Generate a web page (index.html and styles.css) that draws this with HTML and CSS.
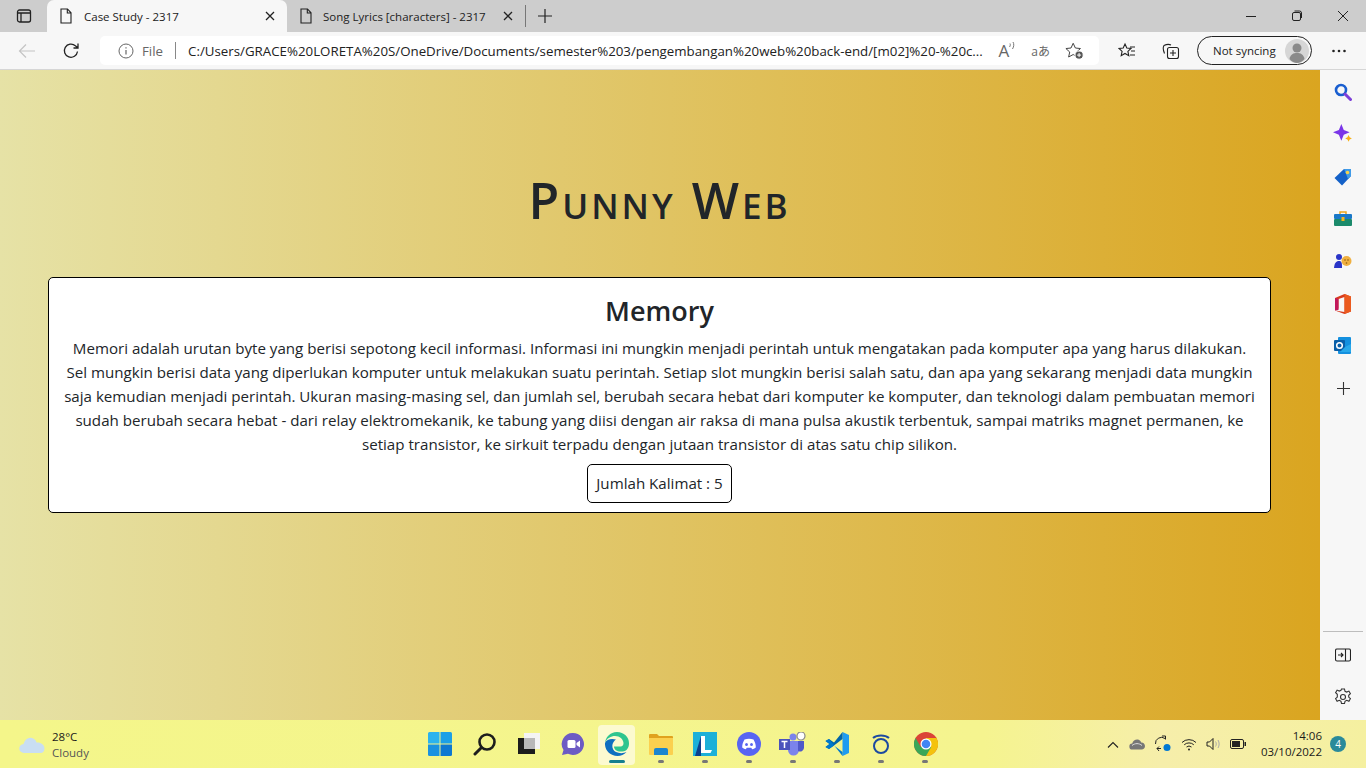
FILE: index.html
```html
<!DOCTYPE html>
<html>
<head>
  <title>Case Study - 2317</title>
  <link rel="stylesheet" href="styles.css">
</head>
<body>

  <div class="tabstrip">
    <div class="tabs-btn">
      <svg width="16" height="16" viewBox="0 0 16 16" fill="none" stroke="#222" stroke-width="1.3"><rect x="1.5" y="2" width="13" height="12" rx="2"/><path d="M1.5 5h13M5 5v9"/></svg>
    </div>
    <div class="tab tab-active">
      <svg class="page-icon" width="14" height="16" viewBox="0 0 14 16" fill="none" stroke="#222" stroke-width="1.1"><path d="M2 1h6.5L12 4.8V15H2zM8.3 1v4H12"/></svg>
      <span class="tab-title">Case Study - 2317</span>
      <svg width="10" height="10" viewBox="0 0 10 10" stroke="#222" stroke-width="1.3"><path d="M1 1l8 8M9 1l-8 8"/></svg>
    </div>
    <div class="tab">
      <svg class="page-icon" width="14" height="16" viewBox="0 0 14 16" fill="none" stroke="#222" stroke-width="1.1"><path d="M2 1h6.5L12 4.8V15H2zM8.3 1v4H12"/></svg>
      <span class="tab-title">Song Lyrics [characters] - 2317</span>
      <svg width="10" height="10" viewBox="0 0 10 10" stroke="#222" stroke-width="1.3"><path d="M1 1l8 8M9 1l-8 8"/></svg>
    </div>
    <div class="tab-sep"></div>
    <div class="new-tab">
      <svg width="14" height="14" viewBox="0 0 14 14" stroke="#222" stroke-width="1.2"><path d="M7 0v14M0 7h14"/></svg>
    </div>
    <div class="win-btns">
      <svg width="46" height="12" viewBox="0 0 46 12" stroke="#222"><path d="M18 6.5h10"/></svg>
      <svg width="46" height="12" viewBox="0 0 46 12" fill="none" stroke="#222"><rect x="18.5" y="2.5" width="8" height="8" rx="1.5"/><path d="M20.5 1h5a2 2 0 0 1 2 2v5"/></svg>
      <svg width="46" height="12" viewBox="0 0 46 12" stroke="#222"><path d="M18 1l10 10M28 1l-10 10"/></svg>
    </div>
  </div>

  <div class="toolbar">
    <div class="tool-btn back-btn">
      <svg width="18" height="16" viewBox="0 0 18 16" fill="none" stroke="#c4c4c4" stroke-width="1.2"><path d="M17 8H1.5M8 1.5L1.5 8 8 14.5"/></svg>
    </div>
    <div class="tool-btn reload-btn">
      <svg width="18" height="18" viewBox="0 0 18 18" fill="none" stroke="#222" stroke-width="1.3"><path d="M15.5 9.5A6.6 6.6 0 1 1 13.4 3.8L16 6M16 1.5V6h-4.5"/></svg>
    </div>
    <div class="address">
      <svg width="16" height="16" viewBox="0 0 16 16" fill="none" stroke="#666" stroke-width="1"><circle cx="8" cy="8" r="7"/><path d="M8 7v4.5M8 4.2v1.4" stroke-width="1.2"/></svg>
      <span class="file-label">File</span>
      <span class="addr-sep"></span>
      <span class="url">C:/Users/GRACE%20LORETA%20S/OneDrive/Documents/semester%203/pengembangan%20web%20back-end/[m02]%20-%20c...</span>
      <span class="addr-icons">
        <span class="read-aloud">A<svg width="7" height="10" viewBox="0 0 7 10" fill="none" stroke="#777"><path d="M.5 6c.9-1.200 1-2.500.5-3.500M3.500 8C5 5.500 5.200 3 4 1"/></svg></span>
        <span class="translate">aあ</span>
        <svg width="20" height="20" viewBox="0 0 22 20" fill="none" stroke="#444" stroke-width="1.1"><path d="M9 1.5l2.400 5.200 5.600.6-4.200 3.800 1.200 5.500L9 13.900l-5 2.700 1.200-5.500L1 7.300l5.600-.6z"/><circle cx="15.500" cy="14.500" r="4.500" fill="#555" stroke="#fff"/><path d="M15.500 12.300v4.400M13.300 14.500h4.400" stroke="#fff"/></svg>
      </span>
    </div>
    <div class="tool-btn fav-btn">
      <svg width="18" height="18" viewBox="0 0 18 18" fill="none" stroke="#222" stroke-width="1.1"><path d="M7 2l1.800 4 4.200.5-3.100 2.900.9 4.300L7 11.500l-3.800 2.200.9-4.300L1 6.500 5.200 6zM12 5h5M13 9h4M12 13h5"/></svg>
    </div>
    <div class="tool-btn coll-btn">
      <svg width="18" height="18" viewBox="0 0 18 18" fill="none" stroke="#222" stroke-width="1.1"><path d="M2.500 11.500C1 8 1 5 2 3.500c3-1.500 5-1.500 7-.5"/><rect x="5.500" y="5.500" width="11" height="11" rx="2"/><path d="M11 8v6M8 11h6"/></svg>
    </div>
    <div class="sync-pill">
      <span>Not syncing</span>
      <svg width="24" height="24" viewBox="0 0 24 24"><circle cx="12" cy="12" r="12" fill="#d6d6d6"/><circle cx="12" cy="9" r="4.500" fill="#8a8a8a"/><path d="M4.500 20c1-5 4-6 7.500-6s6.500 1 7.500 6c-2 2.500-5 4-7.500 4s-5.500-1.500-7.500-4z" fill="#8a8a8a"/></svg>
    </div>
    <div class="tool-btn more-btn">
      <svg width="16" height="4" viewBox="0 0 16 4" fill="#222"><circle cx="2.500" cy="2" r="1.300"/><circle cx="8" cy="2" r="1.300"/><circle cx="13.500" cy="2" r="1.300"/></svg>
    </div>
  </div>

  <div class="main">
    <div class="page">
      <h1>Punny Web</h1>
      <div class="card">
        <h2>Memory</h2>
        <p>Memori adalah urutan byte yang berisi sepotong kecil informasi. Informasi ini mungkin menjadi perintah untuk mengatakan pada komputer apa yang harus dilakukan.<br>
        Sel mungkin berisi data yang diperlukan komputer untuk melakukan suatu perintah. Setiap slot mungkin berisi salah satu, dan apa yang sekarang menjadi data mungkin<br>
        saja kemudian menjadi perintah. Ukuran masing-masing sel, dan jumlah sel, berubah secara hebat dari komputer ke komputer, dan teknologi dalam pembuatan memori<br>
        sudah berubah secara hebat - dari relay elektromekanik, ke tabung yang diisi dengan air raksa di mana pulsa akustik terbentuk, sampai matriks magnet permanen, ke<br>
        setiap transistor, ke sirkuit terpadu dengan jutaan transistor di atas satu chip silikon.</p>
        <div class="count">Jumlah Kalimat : 5</div>
      </div>
    </div>

    <div class="sidebar">
      <div class="side-item">
        <svg width="18" height="18" viewBox="0 0 18 18" fill="none"><circle cx="7" cy="7" r="5" stroke="#1a5fd0" stroke-width="2.600"/><path d="M11 11l5.500 5.500" stroke="#7d3fd8" stroke-width="3" stroke-linecap="round"/></svg>
      </div>
      <div class="side-item">
        <svg width="20" height="20" viewBox="0 0 18 18"><path d="M7.500 0l2.200 5.300L15 7.500l-5.300 2.200L7.500 15l-2.200-5.300L0 7.500l5.300-2.200z" fill="#7a35e8"/><path d="M14 10l1 2 2 1-2 1-1 2-1-2-2-1 2-1z" fill="#f7b21a"/></svg>
      </div>
      <div class="side-item">
        <svg width="18" height="18" viewBox="0 0 18 18"><path d="M10 1h7v7l-9 9.500L.5 10z" fill="#1461c8"/><path d="M10 1h7v7l-3 3z" fill="#3f9be8"/><circle cx="13.500" cy="4.500" r="1.800" fill="#f8d24a"/></svg>
      </div>
      <div class="side-item">
        <svg width="18" height="16" viewBox="0 0 18 16"><path d="M6 3V1h6v2" fill="none" stroke="#eba51f" stroke-width="1.500"/><rect y="3" width="18" height="5" rx="1" fill="#1a78c8"/><rect y="8" width="18" height="7" rx="1" fill="#1b8a6b"/><rect x="7.500" y="6" width="3" height="4" fill="#f4b41f"/></svg>
      </div>
      <div class="side-item">
        <svg width="18" height="16" viewBox="0 0 18 16"><circle cx="5" cy="4" r="3" fill="#2a35c8"/><path d="M0 15c.5-5 2-7 5-7s3 2 3 7z" fill="#2a35c8"/><circle cx="12.500" cy="8" r="5" fill="#f0b040"/><circle cx="11" cy="7" r=".8" fill="#8a5a10"/><circle cx="14" cy="7" r=".8" fill="#8a5a10"/><circle cx="12.500" cy="10" r=".8" fill="#8a5a10"/></svg>
      </div>
      <div class="side-item">
        <svg width="16" height="20" viewBox="0 0 16 20"><path d="M9.500 0L16 2.500v15L9.500 20 0 16.500 9.500 18V3L3.500 5v9.500L0 16.500V4z" fill="#d83b1c"/><path d="M9.500 0L16 2.500v15L9.500 20z" fill="#eb5a1e"/><path d="M0 4l3.500 1v11L0 16.500z" fill="#c2185b"/></svg>
      </div>
      <div class="side-item">
        <svg width="18" height="18" viewBox="0 0 18 18"><rect x="4" y="0" width="13" height="17" rx="1" fill="#1490df"/><rect x="0" y="3" width="11" height="11" rx="1" fill="#0a5fa8"/><circle cx="5.500" cy="8.500" r="2.800" fill="none" stroke="#fff" stroke-width="1.500"/><path d="M11 10l6-3v8H6z" fill="#28a8ea"/></svg>
      </div>
      <div class="side-item">
        <svg width="13" height="13" viewBox="0 0 13 13" stroke="#333" stroke-width="1.100"><path d="M6.500 0v13M0 6.500h13"/></svg>
      </div>
      <div class="side-bottom">
        <div class="side-rule"></div>
        <div class="side-item">
          <svg width="16" height="14" viewBox="0 0 16 14" fill="none" stroke="#222" stroke-width="1.100"><rect x=".5" y="1" width="15" height="12" rx="1.500"/><path d="M10.500 1v12M3 7h5M6 5l2 2-2 2"/></svg>
        </div>
        <div class="side-item">
          <svg width="18" height="18" viewBox="0 0 18 18" fill="none" stroke="#333" stroke-width="1.100"><circle cx="9" cy="9" r="2.500"/><path d="M7.500 1h3l.5 2.300 1.700.8 2.200-1 1.500 2.600-1.700 1.600v1.800l1.700 1.600-1.500 2.600-2.200-1-1.700 1-.5 2.200h-3l-.5-2.200-1.700-1-2.200 1-1.500-2.600 1.700-1.600V6.300L1.600 4.700l1.500-2.600 2.200 1 1.700-.8z"/></svg>
        </div>
      </div>
    </div>
  </div>

  <div class="taskbar">
    <div class="weather">
      <svg width="26" height="18" viewBox="0 0 26 18"><path d="M5 17a4.500 4.500 0 0 1-.5-9C6 3 9.500 1 13 2c2.500.7 4 2.500 4.500 4.500 4-.5 8 2 8 6 0 2.500-1.500 4.500-4 4.500z" fill="#c9def2"/></svg>
      <div>
        <div>28°C</div>
        <div class="weather-sub">Cloudy</div>
      </div>
    </div>

    <div class="task-icons">
      <div class="task-item">
        <svg width="24" height="24" viewBox="0 0 24 24"><path d="M0 1.500A1.500 1.500 0 0 1 1.500 0h10v11.500H0z" fill="#2bb3ee"/><path d="M12.500 0h10A1.500 1.500 0 0 1 24 1.500v10H12.500z" fill="#1ca0e6"/><path d="M0 12.500h11.500V24h-10A1.500 1.500 0 0 1 0 22.500z" fill="#1a92e0"/><path d="M12.500 12.500H24v10a1.500 1.500 0 0 1-1.500 1.500h-10z" fill="#0e78d0"/></svg>
      </div>
      <div class="task-item">
        <svg width="24" height="24" viewBox="0 0 24 24" fill="none" stroke="#1d1d1d"><circle cx="14" cy="10" r="7.500" stroke-width="2.600"/><path d="M8.500 15.500L2 22" stroke-width="3" stroke-linecap="round"/></svg>
      </div>
      <div class="task-item">
        <svg width="24" height="24" viewBox="0 0 24 24"><rect x="1" y="6" width="17" height="16" fill="#1c1c1c"/><rect x="7" y="1" width="16" height="16" fill="#f4f4f4"/><rect x="7" y="6" width="11" height="11" fill="#b8b8b8"/></svg>
      </div>
      <div class="task-item">
        <svg width="24" height="24" viewBox="0 0 24 24"><path d="M12 1a11 11 0 1 1-5 20.800L1 23l1.500-5A11 11 0 0 1 12 1z" fill="#6d5bc4"/><rect x="6.500" y="8" width="8" height="8" rx="1.500" fill="#fff"/><path d="M15.500 11l3.500-2.500v7L15.500 13z" fill="#fff"/></svg>
      </div>
      <div class="task-item task-active">
        <svg width="24" height="24" viewBox="0 0 24 24"><path d="M12 0C5 0 .5 5.500 0 11c2-5 6-7 10-7 5 0 8 3 8.500 7 0 2-1 3.500-3 3.500H9c0 3 3 5 6.500 5 2.500 0 4.500-.5 6-1.500C24 15 24 13 24 11 24 5 19 0 12 0z" fill="#2fc58f"/><path d="M0 11c-.5 7 5 13 12.500 13 3.500 0 6.500-1.300 9-4-3 1.500-7.500 1.500-10.500 0-3.500-2-4.500-6-3-9 .5-1 1.500-2.500 3-3.500C6 6 1.500 7.500 0 11z" fill="#0f6fc0"/></svg>
        <span class="task-bar"></span>
      </div>
      <div class="task-item">
        <svg width="24" height="24" viewBox="0 0 24 24"><path d="M0 3a1 1 0 0 1 1-1h7l2 2h13a1 1 0 0 1 1 1v3H0z" fill="#e0a21e"/><path d="M0 6h24v16a1 1 0 0 1-1 1H1a1 1 0 0 1-1-1z" fill="#fbd04f"/><path d="M5 23v-5a2 2 0 0 1 2-2h10a2 2 0 0 1 2 2v5z" fill="#1b86cf"/></svg>
        <span class="task-dot"></span>
      </div>
      <div class="task-item">
        <svg width="24" height="24" viewBox="0 0 24 24"><rect width="24" height="24" fill="#1cb0d8"/><path d="M2 24L8 4v20z" fill="#0d3f8c"/><path d="M8 4h4v14h7l-1.500 3H8z" fill="#fff"/></svg>
        <span class="task-dot"></span>
      </div>
      <div class="task-item">
        <svg width="24" height="24" viewBox="0 0 24 24"><circle cx="12" cy="12" r="12" fill="#5865f2"/><path d="M7.500 7.500c3-1 6-1 9 0 1.500 2.500 2.300 5 2.300 8-1.200 1-2.500 1.500-3.700 1.800l-.8-1.500h-4.600l-.8 1.500c-1.200-.3-2.500-.8-3.700-1.800 0-3 .8-5.500 2.300-8z" fill="#fff"/><ellipse cx="9.500" cy="12.500" rx="1.400" ry="1.600" fill="#5865f2"/><ellipse cx="14.500" cy="12.500" rx="1.400" ry="1.600" fill="#5865f2"/></svg>
        <span class="task-dot"></span>
      </div>
      <div class="task-item">
        <svg width="30" height="24" viewBox="0 0 30 24"><circle cx="15" cy="5" r="3.500" fill="#7b83eb"/><path d="M10 9h11v9a5.500 5.500 0 0 1-11 0z" fill="#7b83eb"/><path d="M20 9h6v7a4 4 0 0 1-6 3z" fill="#5059c9"/><rect x="1" y="7" width="11" height="11" fill="#4b53bc"/><path d="M3.500 9.500h6M6.500 9.500v6.500" stroke="#fff" stroke-width="1.500"/><circle cx="23" cy="4" r="4" fill="#fff" stroke="#888" stroke-width="1.200"/></svg>
        <span class="task-dot"></span>
      </div>
      <div class="task-item">
        <svg width="24" height="24" viewBox="0 0 24 24"><path d="M17.500 0L24 3v18l-6.500 3z" fill="#1f9cf0"/><path d="M17.500 0v7l-8.500 6.500-5 3.500L.5 15l4-3-4-3L4 7l5 3.500z" fill="#0065a9"/><path d="M17.500 24L4 7 .5 9l4 3-4 3L4 17l5-3.500 8.500 6.500z" fill="#007acc"/></svg>
        <span class="task-dot"></span>
      </div>
      <div class="task-item">
        <svg width="20" height="24" viewBox="0 0 20 24" fill="none" stroke="#1c4aa0" stroke-width="2"><circle cx="10" cy="14" r="7"/><path d="M2 6c4-3.500 12-3.500 16 0"/></svg>
        <span class="task-dot"></span>
      </div>
      <div class="task-item">
        <svg width="24" height="24" viewBox="0 0 24 24"><circle cx="12" cy="12" r="12" fill="#db4437"/><path d="M12 24a12 12 0 0 0 10.400-18H12z" fill="#f4c20d"/><path d="M1.600 6A12 12 0 0 0 12 24l5.200-9H6.800z" fill="#3aa757"/><circle cx="12" cy="12" r="5.500" fill="#fff"/><circle cx="12" cy="12" r="4.300" fill="#4285f4"/></svg>
        <span class="task-dot"></span>
      </div>
    </div>

    <div class="tray">
      <svg width="12" height="7" viewBox="0 0 12 7" fill="none" stroke="#222" stroke-width="1.100"><path d="M1 6.500l5-5 5 5"/></svg>
      <svg class="tray-cloud" width="16" height="12" viewBox="0 0 16 12"><path d="M3.500 11.500a3 3 0 0 1-.3-6C4 2.500 6.500 1 9 1.500c1.700.4 2.800 1.700 3.200 3 2-.2 3.800 1.400 3.800 3.500 0 2-1.500 3.500-3.300 3.500z" fill="#777"/><path d="M3 7.500c3-2.500 7-2.500 10 0" fill="none" stroke="#ddd"/></svg>
      <svg class="tray-sync" width="18" height="18" viewBox="0 0 18 18" fill="none" stroke="#222"><path d="M1.500 9a6 6 0 0 1 9.500-5.500M8 1h3.500v3.500M3 13.500h4M3 13.500l2 2.500M3 13.500l2-2"/><circle cx="13" cy="12.500" r="3.500" fill="#0078d4" stroke="none"/></svg>
      <svg class="tray-wifi" width="16" height="13" viewBox="0 0 16 13" fill="none" stroke="#222"><path d="M1 4.500a10 10 0 0 1 14 0M3.200 6.800a7 7 0 0 1 9.600 0M5.500 9a4 4 0 0 1 5 0"/><circle cx="8" cy="11.500" r="1" fill="#222" stroke="none"/></svg>
      <svg class="tray-vol" width="16" height="14" viewBox="0 0 16 14" fill="none" stroke="#222"><path d="M1 5h2.500L7 1.500v11L3.500 9H1z"/><path d="M9.500 4.500c1 1.500 1 3.500 0 5M12 3c1.500 2.500 1.500 5.500 0 8" stroke="#aaa"/></svg>
      <svg class="tray-batt" width="16" height="10" viewBox="0 0 16 10"><rect x=".5" y=".5" width="13" height="9" rx="1.500" fill="none" stroke="#222"/><rect x="2" y="2" width="8" height="6" fill="#222"/><rect x="14.500" y="3" width="1.500" height="4" fill="#222"/></svg>
      <div class="clock">
        <div>14:06</div>
        <div>03/10/2022</div>
      </div>
      <span class="badge">4</span>
    </div>
  </div>

</body>
</html>
```

FILE: styles.css
```css
body {
  margin: 0;
  height: 768px;
  overflow: hidden;
  display: flex;
  flex-direction: column;
  font-family: "Open Sans", "Noto Sans", sans-serif;
  color: #212529;
  background-color: #f7f7f7;
}

/* Browser tabs */
.tabstrip {
  height: 32px;
  flex: none;
  background-color: #cdcdcd;
  display: flex;
  font-size: 11.5px;
  color: #222;
}

.tabs-btn {
  width: 47px;
  display: flex;
  align-items: center;
  justify-content: center;
}

.tab {
  width: 238px;
  box-sizing: border-box;
  padding: 0 12px;
  display: flex;
  align-items: center;
}

.tab-active {
  width: 240px;
  background-color: #f7f7f7;
  border-radius: 7px 7px 0 0;
}

.page-icon {
  margin-right: 10px;
}

.tab-active .page-icon {
  margin-right: 11px;
}

.tab-title {
  flex: 1;
  white-space: nowrap;
}

.tab-sep {
  width: 1px;
  height: 22px;
  margin-top: 5px;
  background-color: #777;
}

.new-tab {
  width: 38px;
  display: flex;
  align-items: center;
  justify-content: center;
}

.win-btns {
  margin-left: auto;
  display: flex;
  align-items: center;
}

/* Address bar row */
.toolbar {
  height: 38px;
  flex: none;
  box-sizing: border-box;
  border-bottom: 1px solid #d6d6d6;
  display: flex;
  align-items: center;
  background-color: #f7f7f7;
}

.tool-btn {
  display: flex;
  align-items: center;
  justify-content: center;
}

.back-btn {
  width: 54px;
}

.reload-btn {
  width: 34px;
}

.address {
  width: 999px;
  height: 29px;
  margin-left: 12px;
  box-sizing: border-box;
  padding: 0 14px 0 18px;
  background-color: #fff;
  border-radius: 5px;
  display: flex;
  align-items: center;
  font-size: 13.3px;
  color: #222;
}

.file-label {
  margin-left: 8px;
  color: #666;
}

.addr-sep {
  width: 1px;
  height: 17px;
  margin: 0 12px;
  background-color: #888;
}

.url {
  flex: 1;
  white-space: nowrap;
  overflow: hidden;
}

.addr-icons {
  display: flex;
  align-items: center;
  gap: 15px;
  color: #666;
}

.read-aloud {
  display: flex;
  align-items: flex-start;
  font-size: 17px;
  line-height: 20px;
}

.translate {
  font-family: "Open Sans", "Noto Sans CJK JP", sans-serif;
  font-size: 12px;
}

.fav-btn {
  width: 56px;
}

.coll-btn {
  width: 32px;
}

.sync-pill {
  width: 115px;
  height: 29px;
  margin-left: 10px;
  box-sizing: border-box;
  padding: 0 2px 0 15px;
  border: 1px solid #222;
  border-radius: 15px;
  display: flex;
  align-items: center;
  justify-content: space-between;
  font-size: 11.5px;
  color: #222;
}

.more-btn {
  width: 54px;
}

/* Page area */
.main {
  flex: 1;
  display: flex;
  min-height: 0;
}

.page {
  flex: 1;
  box-sizing: border-box;
  padding: 0 49px 0 48px;
  background: linear-gradient(to right, #e6e2a6, goldenrod);
}

h1 {
  margin: 99px 0 46px;
  font-size: 50px;
  line-height: 62px;
  font-weight: 600;
  font-variant: small-caps;
  letter-spacing: 3px;
  text-align: center;
}

.card {
  box-sizing: border-box;
  height: 236px;
  padding: 15px 8px 0;
  background-color: #fff;
  border: 1px solid #000;
  border-radius: 5px;
  text-align: center;
}

h2 {
  margin: 0 0 7px;
  font-size: 27px;
  line-height: 36px;
  font-weight: 600;
}

.card p {
  margin: 0 0 8px;
  font-size: 15.13px;
  line-height: 24px;
  white-space: nowrap;
}

.count {
  display: inline-block;
  padding: 7px 8px;
  border: 1px solid #000;
  border-radius: 5px;
  font-size: 15.13px;
  line-height: 23px;
}

/* Edge sidebar */
.sidebar {
  width: 46px;
  flex: none;
  display: flex;
  flex-direction: column;
  align-items: center;
  padding: 1px 0 2px;
  background-color: #f7f7f7;
}

.side-item {
  height: 42.3px;
  display: flex;
  align-items: center;
  justify-content: center;
}

.side-bottom {
  margin-top: auto;
  width: 100%;
}

.side-rule {
  height: 1px;
  margin: 0 3px 1px;
  background-color: #bdbdbd;
}

/* Windows taskbar */
.taskbar {
  height: 48px;
  flex: none;
  display: grid;
  grid-template-columns: 1fr auto 1fr;
  align-items: center;
  background: linear-gradient(to right, #f4f68a, #f5f48f 72%, #f6eeaa 85%, #f5f0a0);
  font-size: 11.5px;
  color: #1a1a1a;
}

.weather {
  display: flex;
  align-items: center;
  padding: 2px 0 0 19px;
  gap: 7px;
  line-height: 16px;
}

.weather-sub {
  color: #555;
}

.task-icons {
  display: flex;
  align-items: center;
}

.task-item {
  position: relative;
  width: 44.1px;
  height: 40px;
  display: flex;
  align-items: center;
  justify-content: center;
}

.task-item svg {
  position: relative;
}

.task-active::before {
  content: "";
  position: absolute;
  top: 1px;
  bottom: -1px;
  left: 3px;
  right: 4px;
  background-color: #fcfad0;
  border-radius: 4px;
}

.task-dot {
  position: absolute;
  bottom: 1px;
  left: 19px;
  width: 6px;
  height: 3px;
  border-radius: 2px;
  background-color: #777;
}

.task-bar {
  position: absolute;
  bottom: 1px;
  left: 14px;
  width: 16px;
  height: 3px;
  border-radius: 2px;
  background-color: #17808f;
}

.tray {
  display: flex;
  align-items: center;
  justify-content: flex-end;
  padding-right: 20px;
}

.tray-cloud {
  margin-left: 10px;
}

.tray-sync {
  margin-left: 9px;
}

.tray-wifi {
  margin-left: 9px;
}

.tray-vol {
  margin-left: 9px;
}

.tray-batt {
  margin-left: 8px;
}

.clock {
  margin-left: 15px;
  text-align: right;
  line-height: 16px;
}

.badge {
  width: 16px;
  height: 16px;
  margin-left: 8px;
  border-radius: 50%;
  background-color: #2a8a9a;
  color: #fff;
  font-size: 10px;
  line-height: 16px;
  text-align: center;
}
```
